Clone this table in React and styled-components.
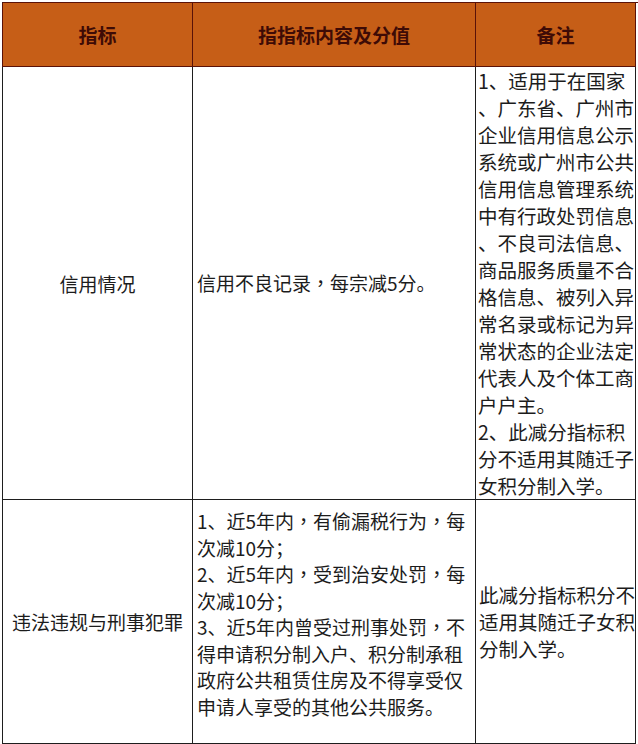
import React from 'react';
import styled, { createGlobalStyle } from 'styled-components';

const GlobalStyle = createGlobalStyle`
  body {
    margin: 0;
    background: #fff;
    font-family: "Noto Sans CJK SC", "Liberation Sans", sans-serif;
  }
`;

// table wrapper
const Table = styled.div`
  display: grid;
  grid-template-columns: 190px 283px 160px;
  margin: 2px 0 0 2px;
  width: 636px;
  border-left: 1px solid #1e1e1e;
  border-top: 1px solid #5a1208;
  box-sizing: border-box;
`;

const HeadCell = styled.div`
  height: 63px;
  display: flex;
  align-items: center;
  justify-content: center;
  background: #c65e17;
  color: #3e0b06;
  font-size: 19px;
  font-weight: 700;
  border-right: 1px solid #5a1208;
  border-bottom: 1px solid #5a1208;
  margin-left: ${p => (p.$first ? '-1px' : '0')};
  border-left: ${p => (p.$first ? '1px solid #5a1208' : 'none')};
`;

const Cell = styled.div`
  display: flex;
  align-items: center;
  justify-content: ${p => (p.$center ? 'center' : 'flex-start')};
  padding: ${p => p.$pad || '0 4px'};
  color: #1c1c1c;
  font-size: ${p => p.$size || '19px'};
  line-height: ${p => p.$lh || '27px'};
  border-right: 1px solid #1e1e1e;
  border-bottom: 1px solid #1e1e1e;
  white-space: nowrap;
  overflow: hidden;
`;

const Lines = styled.div`
  display: flex;
  flex-direction: column;
`;

// the full-width comma sits in the middle of its box in the original
const Comma = styled.span`
  font-family: "Noto Sans CJK TC", sans-serif;
`;

const withCommas = text =>
  text.split('，').map((part, k, arr) => (
    <React.Fragment key={k}>
      {part}
      {k < arr.length - 1 && <Comma>，</Comma>}
    </React.Fragment>
  ));

const criteria = [
  {
    name: '信用情况',
    content: ['信用不良记录，每宗减5分。'],
    contentPad: '0 4px',
    note: [
      '1、适用于在国家',
      '、广东省、广州市',
      '企业信用信息公示',
      '系统或广州市公共',
      '信用信息管理系统',
      '中有行政处罚信息',
      '、不良司法信息、',
      '商品服务质量不合',
      '格信息、被列入异',
      '常名录或标记为异',
      '常状态的企业法定',
      '代表人及个体工商',
      '户户主。',
      '2、此减分指标积',
      '分不适用其随迁子',
      '女积分制入学。',
    ],
    notePad: '0 0 0 2px',
  },
  {
    name: '违法违规与刑事犯罪',
    content: [
      '1、近5年内，有偷漏税行为，每',
      '次减10分；',
      '2、近5年内，受到治安处罚，每',
      '次减10分；',
      '3、近5年内曾受过刑事处罚，不',
      '得申请积分制入户、积分制承租',
      '政府公共租赁住房及不得享受仅',
      '申请人享受的其他公共服务。',
    ],
    contentPad: '8px 4px 23px 4px',
    note: ['此减分指标积分不', '适用其随迁子女积', '分制入学。'],
    notePad: '0 0 0 3px',
  },
];

function App() {
  return (
    <>
      <GlobalStyle />
      <Table>
        <HeadCell $first>指标</HeadCell>
        <HeadCell>指指标内容及分值</HeadCell>
        <HeadCell>备注</HeadCell>
        {criteria.map((row, i) => (
          <React.Fragment key={i}>
            <Cell $center>{row.name}</Cell>
            <Cell $pad={row.contentPad} $lh="26.5px">
              <Lines>
                {row.content.map((t, j) => <span key={j}>{withCommas(t)}</span>)}
              </Lines>
            </Cell>
            <Cell $pad={row.notePad} $size="19.5px" $lh="27px">
              <Lines>
                {row.note.map((t, j) => <span key={j}>{t}</span>)}
              </Lines>
            </Cell>
          </React.Fragment>
        ))}
      </Table>
    </>
  );
}

export default App;
